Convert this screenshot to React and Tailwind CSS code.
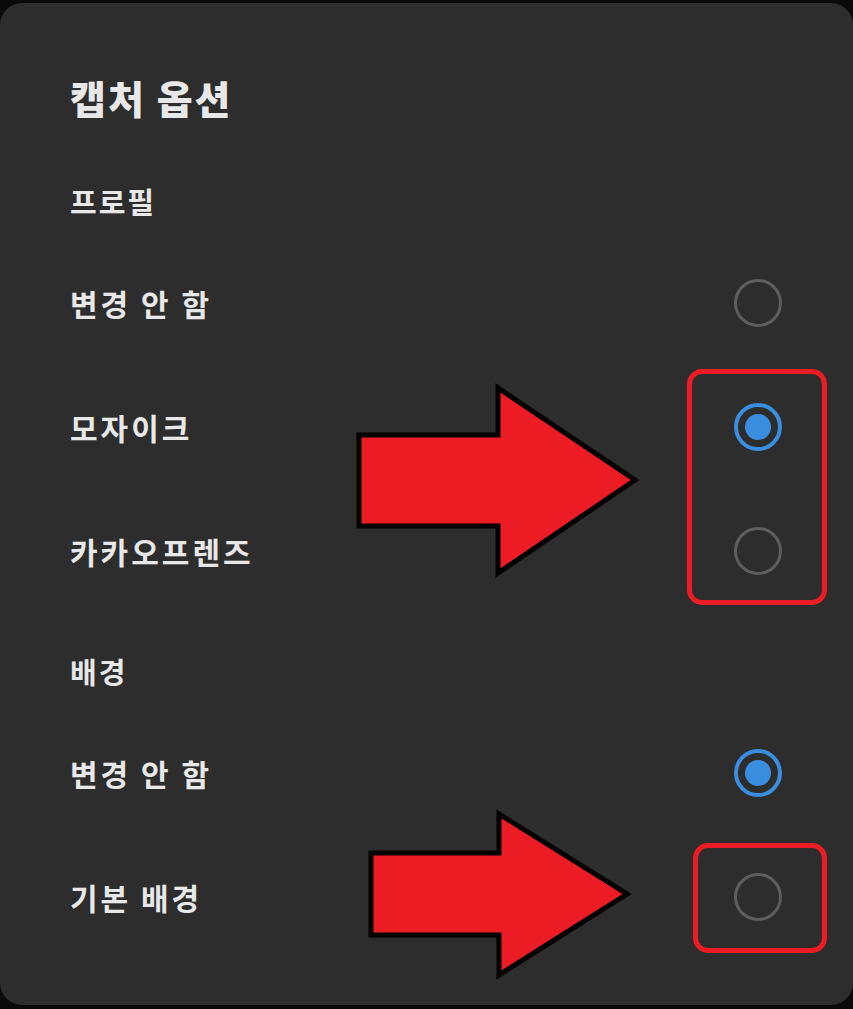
import React, { useState } from 'react';

const font = { fontFamily: '"Noto Sans CJK KR", "Noto Sans", sans-serif' };

const Radio = ({ checked }) =>
  checked ? (
    <div className="w-12 h-12 rounded-full border-4 border-[#3a8ee0] flex items-center justify-center">
      <div className="w-[26px] h-[26px] rounded-full bg-[#3a8ee0]" />
    </div>
  ) : (
    <div className="w-12 h-12 rounded-full border-[3px] border-[#5e5e5e]" />
  );

const Arrow = ({ className, points }) => (
  <svg className={className} viewBox="0 0 290 200" fill="none">
    <polygon points={points} fill="#ec1c24" stroke="#000" strokeWidth="5" strokeLinejoin="miter" />
  </svg>
);

const Section = ({ title }) => (
  <div className="h-[98px] flex items-end pb-[26px]">
    <span className="text-[29px] leading-[28px] tracking-[2px] font-bold text-[#e8e8e8]">{title}</span>
  </div>
);

const Row = ({ label, checked, onClick }) => (
  <div className="h-[124px] flex items-center justify-between pr-[71px] cursor-pointer" onClick={onClick}>
    <span className="text-[30px] leading-[34px] tracking-[3px] font-bold text-[#e8e8e8]">{label}</span>
    <Radio checked={checked} />
  </div>
);

export default function App() {
  const [profile, setProfile] = useState('mosaic');
  const [bg, setBg] = useState('none');

  return (
    <div className="w-[853px] h-[1009px] bg-[#0a0a0a] pt-[3px] relative overflow-hidden" style={font}>
      <div className="h-[1002px] bg-[#2d2d2d] rounded-[22px] pl-[70px]">
        <div className="h-[140px] pt-[74px]">
          <h2 className="text-[39px] leading-[40px] tracking-[2px] font-black text-[#e8e8e8]">캡처 옵션</h2>
        </div>

        <Section title="프로필" />
        <Row label="변경 안 함" checked={profile === 'none'} onClick={() => setProfile('none')} />
        <Row label="모자이크" checked={profile === 'mosaic'} onClick={() => setProfile('mosaic')} />
        <Row label="카카오프렌즈" checked={profile === 'kakao'} onClick={() => setProfile('kakao')} />

        <Section title="배경" />
        <Row label="변경 안 함" checked={bg === 'none'} onClick={() => setBg('none')} />
        <Row label="기본 배경" checked={bg === 'default'} onClick={() => setBg('default')} />
      </div>

      {/* annotations */}
      <div className="absolute left-[687px] top-[369px] w-[140px] h-[236px] border-[5px] border-[#ec1c24] rounded-[15px] pointer-events-none" />
      <div className="absolute left-[693px] top-[843px] w-[134px] h-[110px] border-[5px] border-[#ec1c24] rounded-[15px] pointer-events-none" />

      <Arrow
        className="absolute left-[350px] top-[380px] w-[290px] h-[200px] pointer-events-none"
        points="9,55 148,55 148,8 285,100 148,193 148,146 9,146"
      />
      <Arrow
        className="absolute left-[350px] top-[800px] w-[290px] h-[200px] pointer-events-none"
        points="21,53 149,53 149,14 277,94 149,175 149,135 21,135"
      />
    </div>
  );
}
